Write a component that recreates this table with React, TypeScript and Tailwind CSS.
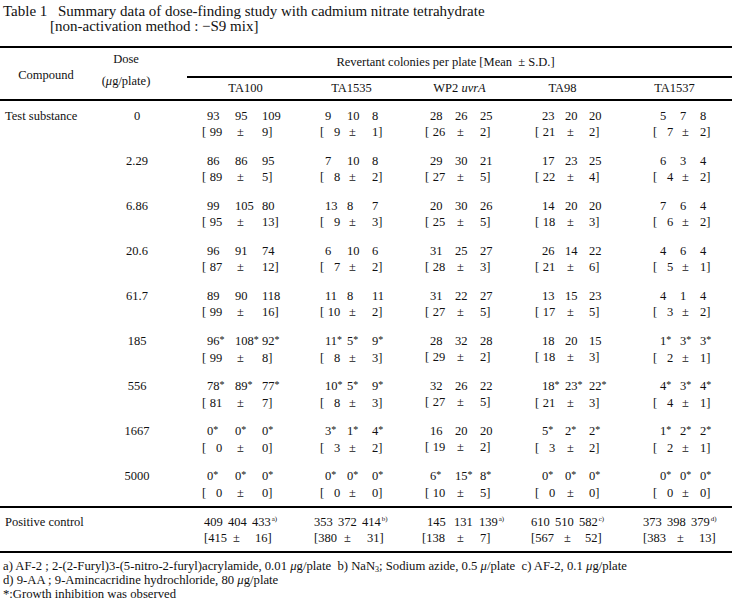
import React from "react";

type Cfg = { l1: string; a: string; b: string; l2: string; c: string; d: string };

// column offsets inside each strain block (test substance rows)
const testCfg: Cfg[] = [
  { l1: "pl-[20px]", a: "w-[28px]", b: "w-[27px]", l2: "pl-[15px]", c: "w-[35px]", d: "w-[25px]" },
  { l1: "pl-[29px]", a: "w-[22px]", b: "w-[25px]", l2: "pl-[24px]", c: "w-[29px]", d: "w-[23px]" },
  { l1: "pl-[25px]", a: "w-[25px]", b: "w-[25px]", l2: "pl-[20px]", c: "w-[32px]", d: "w-[23px]" },
  { l1: "pl-[28px]", a: "w-[23px]", b: "w-[24px]", l2: "pl-[21px]", c: "w-[32px]", d: "w-[22px]" },
  { l1: "pl-[37px]", a: "w-[20px]", b: "w-[20px]", l2: "pl-[30px]", c: "w-[29px]", d: "w-[18px]" },
];

// positive control has three-digit counts, so the columns sit further left
const posCfg: Cfg[] = [
  { l1: "pl-[17px]", a: "w-[24px]", b: "w-[24px]", l2: "pl-[17px]", c: "w-[29px]", d: "w-[22px]" },
  { l1: "pl-[18px]", a: "w-[24px]", b: "w-[24px]", l2: "pl-[18px]", c: "w-[30px]", d: "w-[23px]" },
  { l1: "pl-[22px]", a: "w-[27px]", b: "w-[25px]", l2: "pl-[17px]", c: "w-[35px]", d: "w-[23px]" },
  { l1: "pl-[17px]", a: "w-[24px]", b: "w-[24px]", l2: "pl-[17px]", c: "w-[33px]", d: "w-[21px]" },
  { l1: "pl-[20px]", a: "w-[24px]", b: "w-[24px]", l2: "pl-[20px]", c: "w-[34px]", d: "w-[22px]" },
];

const rows = [
  { dose: "0", g: ["93 95 109 99 9", "9 10 8 9 1", "28 26 25 26 2", "23 20 20 21 2", "5 7 8 7 2"] },
  { dose: "2.29", g: ["86 86 95 89 5", "7 10 8 8 2", "29 30 21 27 5", "17 23 25 22 4", "6 3 4 4 2"] },
  { dose: "6.86", g: ["99 105 80 95 13", "13 8 7 9 3", "20 30 26 25 5", "14 20 20 18 3", "7 6 4 6 2"] },
  { dose: "20.6", g: ["96 91 74 87 12", "6 10 6 7 2", "31 25 27 28 3", "26 14 22 21 6", "4 6 4 5 1"] },
  { dose: "61.7", g: ["89 90 118 99 16", "11 8 11 10 2", "31 22 27 27 5", "13 15 23 17 5", "4 1 4 3 2"] },
  { dose: "185", g: ["96* 108* 92* 99 8", "11* 5* 9* 8 3", "28 32 28 29 2", "18 20 15 18 3", "1* 3* 3* 2 1"] },
  { dose: "556", g: ["78* 89* 77* 81 7", "10* 5* 9* 8 3", "32 26 22 27 5", "18* 23* 22* 21 3", "4* 3* 4* 4 1"] },
  { dose: "1667", g: ["0* 0* 0* 0 0", "3* 1* 4* 3 2", "16 20 20 19 2", "5* 2* 2* 3 2", "1* 2* 2* 2 1"] },
  { dose: "5000", g: ["0* 0* 0* 0 0", "0* 0* 0* 0 0", "6* 15* 8* 10 5", "0* 0* 0* 0 0", "0* 0* 0* 0 0"] },
];

const positive = [
  { v: "409 404 433 415 16", sup: "a)" },
  { v: "353 372 414 380 31", sup: "b)" },
  { v: "145 131 139 138 7", sup: "a)" },
  { v: "610 510 582 567 52", sup: "c)" },
  { v: "373 398 379 383 13", sup: "d)" },
];

// the asterisk in the source is small and sits high
function Num({ v }: { v: string }) {
  if (!v.endsWith("*")) return <>{v}</>;
  return (
    <>
      {v.slice(0, -1)}
      <span className="text-[10px] relative -top-[2px]">*</span>
    </>
  );
}

function Block({ data, cfg, sup, pos }: { data: string; cfg: Cfg; sup?: string; pos?: boolean }) {
  const [v1, v2, v3, m, sd] = data.split(" ");
  return (
    <div className="w-[109px] shrink-0 leading-4 whitespace-nowrap">
      <div className={`flex ${cfg.l1}`}>
        <span className={`${cfg.a} shrink-0`}>
          <Num v={v1} />
        </span>
        <span className={`${cfg.b} shrink-0`}>
          <Num v={v2} />
        </span>
        <span className="shrink-0">
          <Num v={v3} />
          {sup && <sup className="text-[7px] ml-[1px] top-[-5px]">{sup}</sup>}
        </span>
      </div>
      <div className={`flex ${cfg.l2}`}>
        <span className={`${cfg.c} shrink-0`}>
          [{pos ? m : <span className="inline-block w-[16px] text-right">{m}</span>}
        </span>
        <span className={`${cfg.d} shrink-0`}>±</span>
        <span className="shrink-0">{sd}]</span>
      </div>
    </div>
  );
}

export default function App() {
  return (
    <div className="w-[732px] h-[600px] overflow-hidden bg-white text-[#111] text-[12.5px] font-['Liberation_Serif','Noto_Sans_CJK_JP',serif]">
      <div className="flex pt-[4px] leading-[15px] text-[15px]">
        <div className="w-[58px] shrink-0 pl-[3px]">Table 1</div>
        <div>
          <div>Summary data of dose-finding study with cadmium nitrate tetrahydrate</div>
          <div className="-ml-2">[non-activation method : −S9 mix]</div>
        </div>
      </div>

      <div className="mt-[12px] border-t-2 border-black">
        {/* header */}
        <div className="flex h-[53px] border-b-2 border-black">
          <div className="w-[92px] shrink-0 flex items-center justify-center pt-[3px]">Compound</div>
          <div className="w-[68px] shrink-0 flex flex-col items-center pt-[3px] gap-[6px] leading-4">
            <span>Dose</span>
            <span>
              (<i>μ</i>g/plate)
            </span>
          </div>
          <div className="w-[27px] shrink-0" />
          <div className="flex-1 flex flex-col">
            <div className="h-[28px] flex items-center justify-center pr-[28px]">
              Revertant colonies per plate [Mean&nbsp;&nbsp;± S.D.]
            </div>
            <div className="flex flex-1 border-t-2 border-black">
              <div className="w-[109px] flex items-center justify-center pl-[8px]">TA100</div>
              <div className="w-[109px] flex items-center justify-center pl-[2px]">TA1535</div>
              <div className="w-[109px] flex items-center justify-center">
                WP2&nbsp;<i>uvrA</i>
              </div>
              <div className="w-[109px] flex items-center justify-center pr-[12px]">TA98</div>
              <div className="w-[109px] flex items-center justify-center pr-[6px]">TA1537</div>
            </div>
          </div>
        </div>

        {/* test substance */}
        <div className="border-b-2 border-black">
          {rows.map((r, i) => (
            <div key={r.dose} className="flex h-[45px] pt-[7px]">
              <div className="w-[117px] shrink-0 pl-[5px] leading-4">{i === 0 ? "Test substance" : ""}</div>
              <div className="w-[40px] shrink-0 text-center leading-4">{r.dose}</div>
              <div className="w-[30px] shrink-0" />
              {r.g.map((g, j) => (
                <Block key={j} data={g} cfg={testCfg[j]} />
              ))}
            </div>
          ))}
        </div>

        {/* positive control */}
        <div className="flex h-[45px] pt-[6px] border-b-2 border-black">
          <div className="w-[187px] shrink-0 pl-[5px] leading-4">Positive control</div>
          {positive.map((p, j) => (
            <Block key={j} data={p.v} cfg={posCfg[j]} sup={p.sup} pos />
          ))}
        </div>
      </div>

      <div className="pt-[6px] pl-[3px] leading-[14px] whitespace-nowrap text-[12.7px]">
        <div>
          a) AF-2 ; 2-(2-Furyl)3-(5-nitro-2-furyl)acrylamide, 0.01 <i>μ</i>g/plate&nbsp;&nbsp;b) NaN
          <sub className="text-[8px]">3</sub>; Sodium azide, 0.5 <i>μ</i>/plate&nbsp;&nbsp;c) AF-2, 0.1 <i>μ</i>g/plate
        </div>
        <div>d) 9-AA ; 9-Amincacridine hydrochloride, 80 <i>μ</i>g/plate</div>
        <div>*:Growth inhibition was observed</div>
      </div>
    </div>
  );
}
